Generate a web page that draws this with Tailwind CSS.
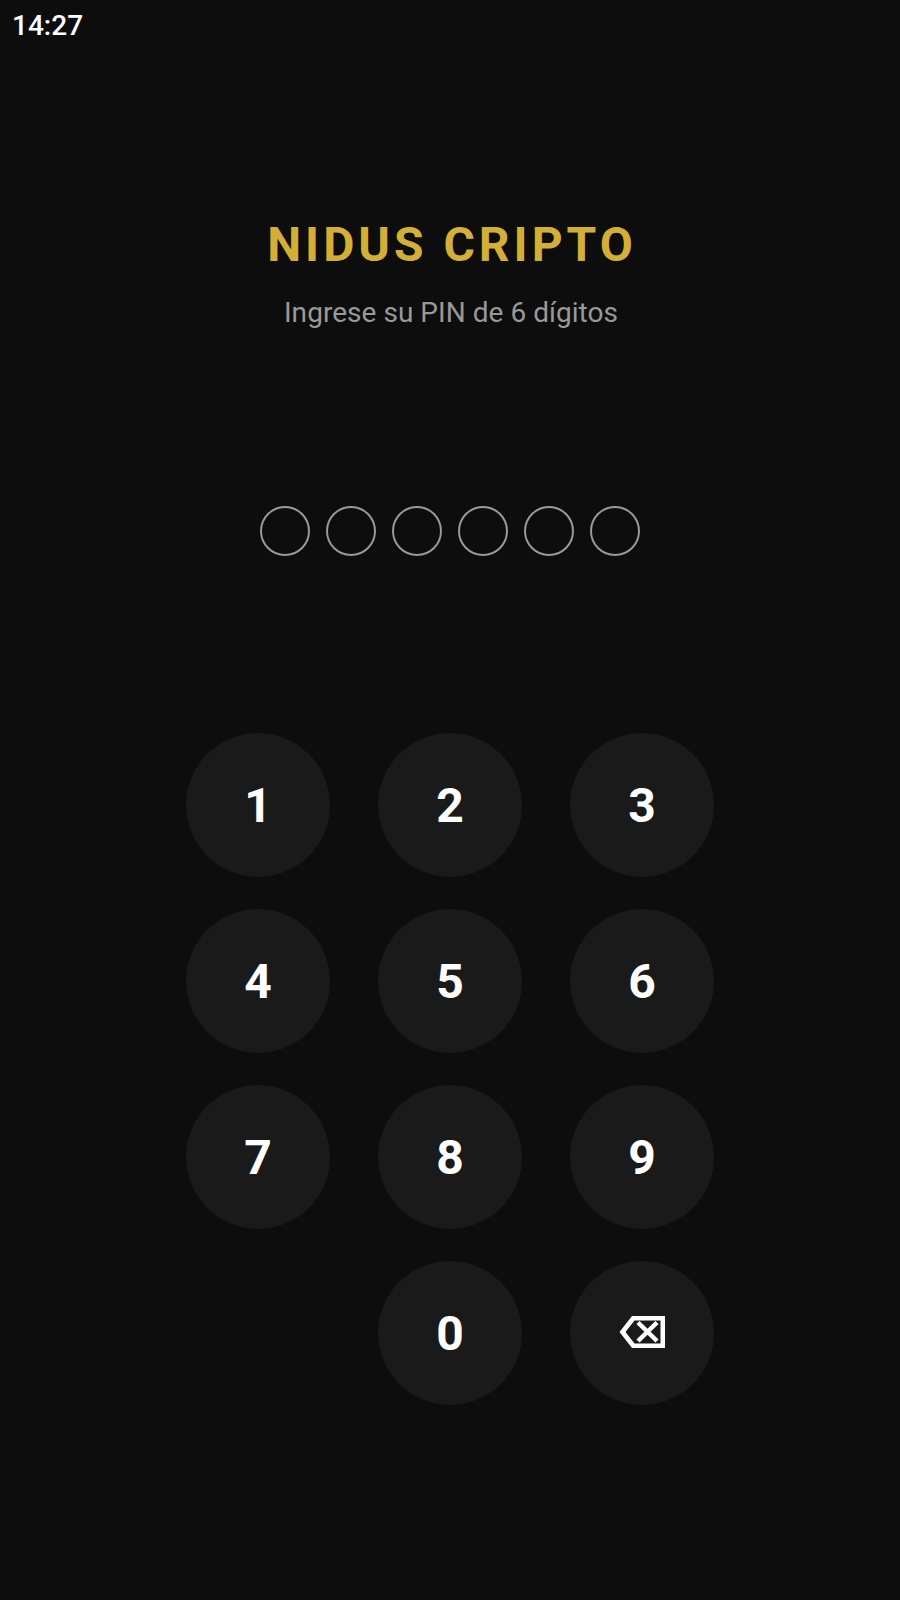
<!DOCTYPE html>
<html lang="es">
<head>
    <meta charset="UTF-8">
    <meta name="viewport" content="width=device-width, initial-scale=1.0">
    <title>Nidus Cripto</title>
    <script src="https://cdn.jsdelivr.net/npm/@tailwindcss/browser@4"></script>
</head>
<body class="bg-[#0d0d0d] text-white min-h-screen font-['Roboto',sans-serif]">
    <div class="h-[1600px] flex flex-col">
        <!-- Status bar -->
        <div class="h-[52px] px-3 flex items-center">
            <span class="text-[28px] font-medium">14:27</span>
        </div>

        <!-- Header -->
        <div class="mt-[165px] flex flex-col items-center">
            <h1 class="pl-1 text-[48px] leading-[56px] font-bold tracking-[4px] text-[#d4af37]">NIDUS CRIPTO</h1>
            <p class="mt-[24px] ml-[2px] text-[28px] leading-[32px] tracking-[0.04px] text-[#999999]">Ingrese su PIN de 6 dígitos</p>
        </div>

        <!-- PIN dots -->
        <div class="mt-[177px] flex justify-center gap-4">
            <div class="w-[50px] h-[50px] rounded-full border-2 border-[#999999]"></div>
            <div class="w-[50px] h-[50px] rounded-full border-2 border-[#999999]"></div>
            <div class="w-[50px] h-[50px] rounded-full border-2 border-[#999999]"></div>
            <div class="w-[50px] h-[50px] rounded-full border-2 border-[#999999]"></div>
            <div class="w-[50px] h-[50px] rounded-full border-2 border-[#999999]"></div>
            <div class="w-[50px] h-[50px] rounded-full border-2 border-[#999999]"></div>
        </div>

        <!-- Keypad -->
        <div class="mt-[177px] grid grid-cols-[144px_144px_144px] gap-x-12 gap-y-8 justify-center text-[48px] font-bold">
            <button class="h-[144px] pt-[2px] rounded-full bg-[#1a1a1a]">1</button>
            <button class="h-[144px] pt-[2px] rounded-full bg-[#1a1a1a]">2</button>
            <button class="h-[144px] pt-[2px] rounded-full bg-[#1a1a1a]">3</button>
            <button class="h-[144px] pt-[2px] rounded-full bg-[#1a1a1a]">4</button>
            <button class="h-[144px] pt-[2px] rounded-full bg-[#1a1a1a]">5</button>
            <button class="h-[144px] pt-[2px] rounded-full bg-[#1a1a1a]">6</button>
            <button class="h-[144px] pt-[2px] rounded-full bg-[#1a1a1a]">7</button>
            <button class="h-[144px] pt-[2px] rounded-full bg-[#1a1a1a]">8</button>
            <button class="h-[144px] pt-[2px] rounded-full bg-[#1a1a1a]">9</button>
            <div></div>
            <button class="h-[144px] pt-[2px] rounded-full bg-[#1a1a1a]">0</button>
            <button class="h-[144px] rounded-full bg-[#1a1a1a] flex items-center justify-center" aria-label="Borrar">
                <svg class="w-[46px] h-[32px] mb-[2px]" viewBox="0 0 46 32" fill="none">
                    <path fill="#ffffff" fill-rule="evenodd" d="M0.5 16 L13 0 H46 V32 H13 Z M6.5 16 L15.5 4.5 H41.5 V27.5 H15.5 Z"/>
                    <path stroke="#ffffff" stroke-width="4.5" d="M19 6.5 L38 25 M38 6.5 L19 25"/>
                </svg>
            </button>
        </div>
    </div>
</body>
</html>
